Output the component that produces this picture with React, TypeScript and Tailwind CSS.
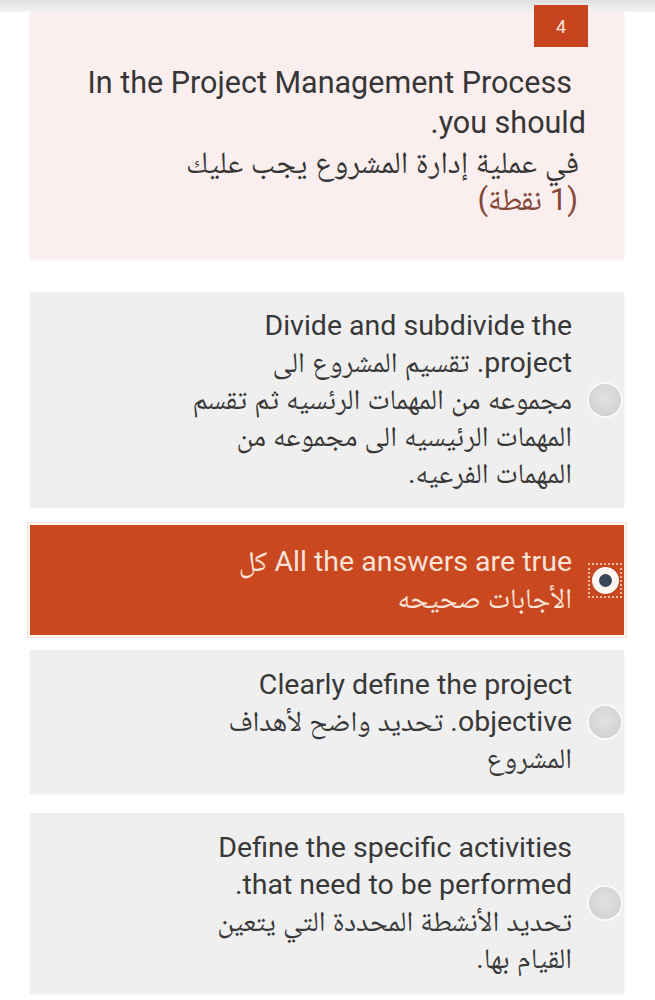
import React from 'react'

// one answer option of the quiz card
type Option = { lines: string[]; selected?: boolean }

const options: Option[] = [
  {
    lines: [
      'Divide and subdivide the',
      'project. تقسيم المشروع الى',
      'مجموعه من المهمات الرئسيه ثم تقسم',
      'المهمات الرئيسيه الى مجموعه من',
      'المهمات الفرعيه.',
    ],
  },
  { lines: ['All the answers are true كل', 'الأجابات صحيحه'], selected: true },
  { lines: ['Clearly define the project', 'objective. تحديد واضح لأهداف', 'المشروع'] },
  {
    lines: [
      'Define the specific activities',
      'that need to be performed.',
      'تحديد الأنشطة المحددة التي يتعين',
      'القيام بها.',
    ],
  },
]

function Radio({ checked }: { checked?: boolean }) {
  if (checked) {
    return (
      <div className="w-[34px] h-[35px] shrink-0 border-2 border-dotted border-[#f2b9a3] flex items-center justify-center">
        <div className="w-[27px] h-[27px] rounded-full bg-[#fdf6f3] flex items-center justify-center shadow-[0_0_2px_rgba(0,0,0,0.25)]">
          <div className="w-[13px] h-[13px] rounded-full bg-[#3a4556]" />
        </div>
      </div>
    )
  }
  return (
    <div className="w-[34px] shrink-0 flex justify-center">
      <div className="w-[32px] h-[32px] rounded-full bg-[radial-gradient(circle_at_50%_45%,#e2e2e2_0%,#d4d4d4_65%,#c6c6c6_100%)] shadow-[0_0_0_2px_rgba(255,255,255,0.6)]" />
    </div>
  )
}

const spacing = ['mt-[34px] py-[15px]', 'mt-[18px] py-[18px]', 'mt-[15px] py-[16px]', 'mt-[20px] py-[16px]']

export default function App() {
  return (
    <div dir="rtl" className="w-[655px] min-h-[1000px] bg-white font-['Roboto','Noto_Naskh_Arabic','DejaVu_Sans',sans-serif] overflow-hidden">
      <div className="h-[12px] bg-gradient-to-b from-[#dedede] to-[#f4f4f4]" />

      {/* question header */}
      <div className="relative mr-[31px] ml-[30px] bg-[#faeeee] pt-[51px] pb-[41px] pr-[38px] text-[#363636] text-[30.5px] shadow-[0_1px_3px_rgba(0,0,0,0.08)]">
        <div className="absolute -top-[7px] right-[36px] w-[54px] h-[42px] bg-[#c8441f] text-[#fbe5dc] text-[18px] flex items-center justify-center">
          4
        </div>
        <div className="leading-[40px] mr-[14px]">In the Project Management Process</div>
        <div className="leading-[40px]">you should.</div>
        <div className="leading-[40px] mr-[7px] text-[31px]">في عملية إدارة المشروع يجب عليك</div>
        <div className="leading-[34px] mr-[8px] text-[31px] text-[#854838]">(1 نقطة)</div>
      </div>

      {options.map((opt, i) => (
        <div
          key={i}
          className={`${spacing[i]} mr-[31px] ml-[30px] pr-[2px] flex items-center gap-[16px] ${
            opt.selected
              ? 'bg-[#c9481f] text-[#fce2d7] shadow-[0_0_0_2px_#fff6f2,0_0_0_3px_#f7e4dc]'
              : 'bg-[#efefef] text-[#383838] shadow-[0_1px_2px_rgba(0,0,0,0.08)]'
          }`}
        >
          <Radio checked={opt.selected} />
          <div className="text-[28.5px] leading-[37px]">
            {opt.lines.map((l, j) => (
              <div key={j}>{l}</div>
            ))}
          </div>
        </div>
      ))}
    </div>
  )
}
